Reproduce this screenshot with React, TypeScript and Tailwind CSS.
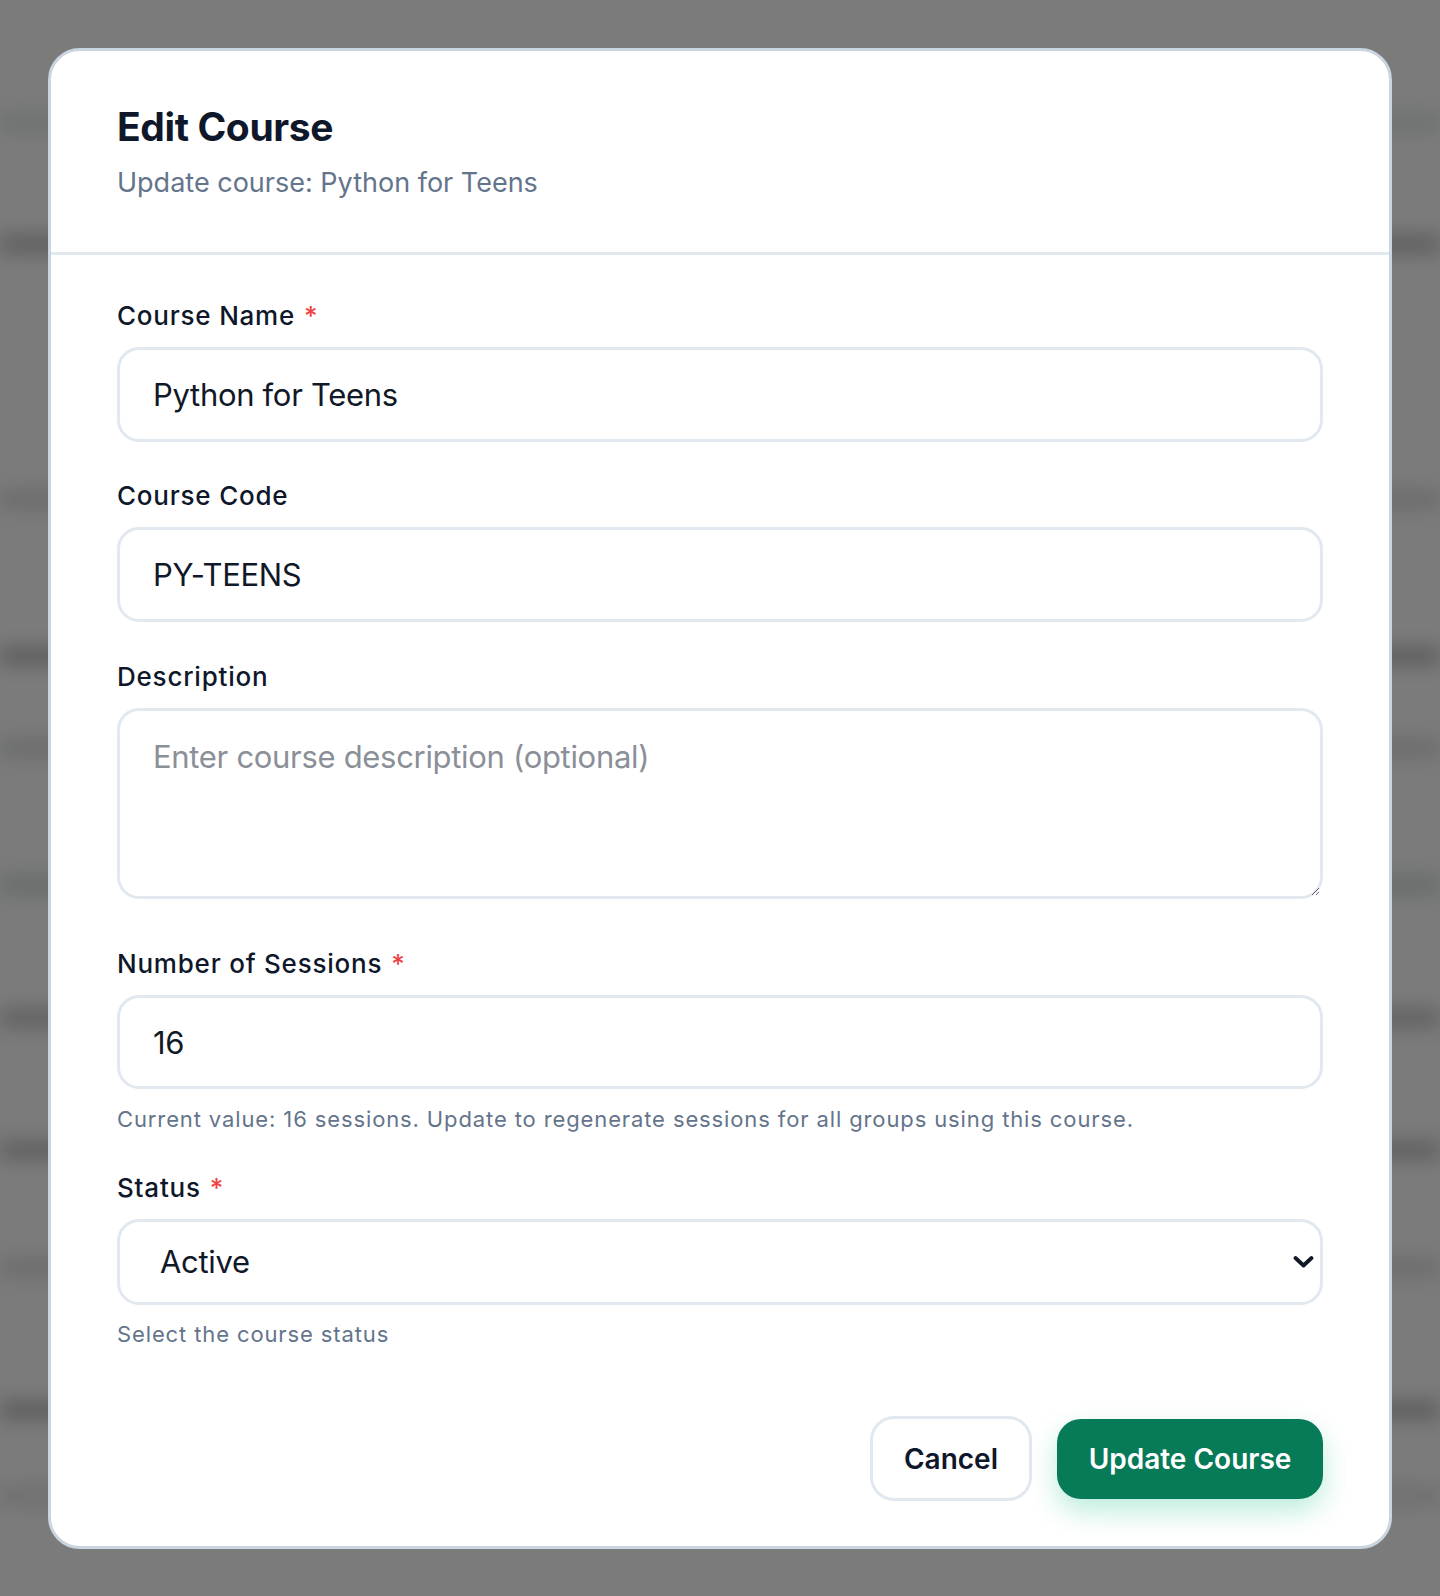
import React from "react";

const bands = [
  { top: "mt-[115px]", tone: "bg-[#616b66]" },
  { top: "mt-[108px]", tone: "bg-[#474747]" },
  { top: "mt-[241px]", tone: "bg-[#5e5e5e]" },
  { top: "mt-[143px]", tone: "bg-[#444444]" },
  { top: "mt-[78px]", tone: "bg-[#5c5f5e]" },
  { top: "mt-[123px]", tone: "bg-[#53605a]" },
  { top: "mt-[119px]", tone: "bg-[#4a4a4a]" },
  { top: "mt-[118px]", tone: "bg-[#484848]" },
  { top: "mt-[103px]", tone: "bg-[#606060]" },
  { top: "mt-[129px]", tone: "bg-[#444444]" },
  { top: "mt-[72px]", tone: "bg-[#656565]" },
];

function Label(props: { text: string; required?: boolean }) {
  return (
    <label className="block text-[26px] leading-[36px] font-medium tracking-[0.03em] text-[#0f172a] mb-[13px]">
      {props.text}
      {props.required && <span className="text-[#ef4444] ml-[9px]">*</span>}
    </label>
  );
}

/** Edit course modal */
function App() {
  return (
    <div className="relative min-h-[1596px] bg-[#7b7b7b] overflow-hidden font-['Inter',sans-serif]">
      {/* blurred page behind the overlay */}
      <div className="absolute inset-0 flex flex-col blur-[10px] opacity-70">
        {bands.map((b, i) => (
          <div key={i} className={`${b.top} h-[14px] w-full ${b.tone}`}></div>
        ))}
      </div>

      {/* modal */}
      <div className="relative p-[48px]">
        <div className="bg-white border-[3px] border-[#cbd5e1] rounded-[32px] overflow-hidden">
          {/* header */}
          <div className="px-[66px] pt-[52px] pb-[49px] border-b-[3px] border-[#e2e8f0]">
            <h2 className="text-[39px] leading-[48px] font-bold text-[#0f172a] tracking-[-0.01em]">Edit Course</h2>
            <p className="mt-[12px] text-[27px] leading-[40px] text-[#64748b]">Update course: Python for Teens</p>
          </div>

          {/* form */}
          <div className="px-[66px] pt-[43px] pb-[45px] flex flex-col">
            <div>
              <Label text="Course Name" required />
              <input
                readOnly
                value="Python for Teens"
                className="w-full h-[95px] border-[3px] border-[#e2e8f0] rounded-[22px] px-[33px] text-[31px] tracking-[-0.01em] text-[#111827] outline-none"
              />
            </div>

            <div className="mt-[36px]">
              <Label text="Course Code" />
              <input
                readOnly
                value="PY-TEENS"
                className="w-full h-[95px] border-[3px] border-[#e2e8f0] rounded-[22px] px-[33px] text-[31px] tracking-[-0.01em] text-[#111827] outline-none"
              />
            </div>

            <div className="mt-[37px]">
              <Label text="Description" />
              <textarea
                readOnly
                placeholder="Enter course description (optional)"
                className="block w-full h-[191px] border-[3px] border-[#e2e8f0] rounded-[22px] px-[33px] pt-[26px] text-[31px] tracking-[-0.01em] leading-[40px] text-[#111827] placeholder:text-[#8b8f97] outline-none"
              ></textarea>
            </div>

            <div className="mt-[47px]">
              <Label text="Number of Sessions" required />
              <input
                readOnly
                value="16"
                className="w-full h-[94px] border-[3px] border-[#e2e8f0] rounded-[22px] px-[33px] text-[31px] tracking-[-0.01em] text-[#111827] outline-none"
              />
              <p className="mt-[14px] text-[22px] leading-[32px] tracking-[0.04em] text-[#64748b]">
                Current value: 16 sessions. Update to regenerate sessions for all groups using this course.
              </p>
            </div>

            <div className="mt-[35px]">
              <Label text="Status" required />
              <div className="relative">
                <select
                  defaultValue="active"
                  className="appearance-none w-full h-[86px] border-[3px] border-[#e2e8f0] rounded-[22px] pl-[40px] pr-[60px] text-[31px] tracking-[-0.01em] text-[#111827] bg-white outline-none"
                >
                  <option value="active">Active</option>
                  <option value="inactive">Inactive</option>
                  <option value="archived">Archived</option>
                </select>
                <svg
                  className="absolute right-[9px] top-1/2 -translate-y-1/2 pointer-events-none"
                  width="21"
                  height="13"
                  viewBox="0 0 21 13"
                  fill="none"
                >
                  <path d="M2.5 2.5 L10.5 10 L18.5 2.5" stroke="#111827" strokeWidth="3.8" strokeLinecap="round" strokeLinejoin="round" />
                </svg>
              </div>
              <p className="mt-[13px] text-[22px] leading-[32px] tracking-[0.04em] text-[#64748b]">Select the course status</p>
            </div>

            {/* actions */}
            <div className="mt-[66px] flex justify-end items-center gap-[25px]">
              <button className="w-[162px] h-[85px] border-[3px] border-[#e2e8f0] rounded-[24px] bg-white text-[28px] font-semibold text-[#0f172a]">
                Cancel
              </button>
              <button className="w-[266px] h-[80px] rounded-[24px] bg-[#077a58] text-[28px] font-semibold text-white shadow-[0_12px_28px_rgba(16,185,129,0.28)]">
                Update Course
              </button>
            </div>
          </div>
        </div>
      </div>
    </div>
  );
}

export default App;
